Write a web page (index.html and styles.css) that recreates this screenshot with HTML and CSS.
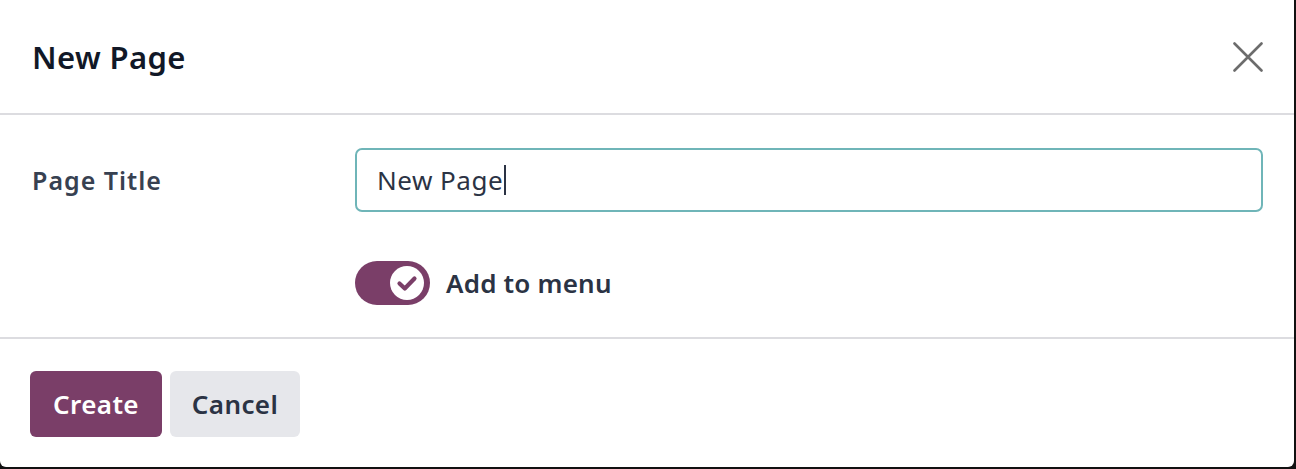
FILE: index.html
```html
<!DOCTYPE html>
<html>
<head>
<meta charset="utf-8">
<link rel="stylesheet" href="styles.css">
</head>
<body>
<div class="modal">
  <header class="modal-header">
    <h4 class="modal-title">New Page</h4>
    <button class="btn-close" aria-label="Close">
      <svg width="30" height="30" viewBox="0 0 30 30"><path d="M1.5 1.5 L28.5 28.5 M28.5 1.5 L1.5 28.5" stroke="#6c6c6c" stroke-width="2.6" stroke-linecap="round"/></svg>
    </button>
  </header>
  <main class="modal-body">
    <div class="row">
      <label class="field-label">Page Title</label>
      <div class="input"><span class="input-text">New Page</span><span class="caret"></span></div>
    </div>
    <div class="row row-toggle">
      <div class="spacer"></div>
      <div class="toggle-wrap">
        <div class="toggle">
          <svg class="knob" width="36" height="36" viewBox="0 0 36 36">
            <circle cx="18" cy="18" r="17" fill="#fff"/>
            <path d="M10.5 18.5 L15.8 23.5 L25.5 13.5" fill="none" stroke="#7a3e68" stroke-width="4.2" stroke-linecap="round" stroke-linejoin="round"/>
          </svg>
        </div>
        <span class="toggle-label">Add to menu</span>
      </div>
    </div>
  </main>
  <footer class="modal-footer">
    <button class="btn btn-primary">Create</button>
    <button class="btn btn-secondary">Cancel</button>
  </footer>
</div>
</body>
</html>
```

FILE: styles.css
```css
html, body {
  margin: 0;
  padding: 0;
  background: #111;
}
body {
  font-family: "Noto Sans", "Open Sans", sans-serif;
  color: #374151;
  width: 1296px;
  height: 469px;
  overflow: hidden;
}
.modal {
  width: 1294px;
  height: 467px;
  background: #fff;
  border-radius: 0 0 6px 6px;
  display: flex;
  flex-direction: column;
}
.modal-header {
  height: 113px;
  flex: none;
  border-bottom: 2px solid #dcdce0;
  display: flex;
  align-items: center;
  justify-content: space-between;
  padding: 0 31px 0 32px;
}
.modal-title {
  margin: 0;
  font-size: 31px;
  font-weight: 600;
  color: #111827;
  letter-spacing: 0.4px;
  padding-top: 0;
}
.btn-close {
  background: none;
  border: 0;
  padding: 0;
  width: 30px;
  height: 30px;
  display: flex;
}
.modal-body {
  height: 224px;
  flex: none;
  box-sizing: border-box;
  border-bottom: 2px solid #dcdce0;
  padding: 33px 31px 0 32px;
  display: flex;
  flex-direction: column;
}
.row {
  display: flex;
  align-items: center;
}
.field-label,
.spacer {
  width: 323px;
  flex: none;
}
.field-label {
  font-size: 25px;
  font-weight: 600;
  color: #374151;
  letter-spacing: 1px;
}
.input {
  flex: 1;
  height: 64px;
  box-sizing: border-box;
  border: 2px solid #6fb5b8;
  border-radius: 7px;
  display: flex;
  align-items: center;
  padding-left: 20px;
  font-size: 26px;
  letter-spacing: 0.5px;
  color: #2b3344;
}
.caret {
  width: 2px;
  height: 30px;
  background: #2b3344;
  margin-left: 1px;
}
.row-toggle {
  margin-top: 49px;
}
.toggle-wrap {
  display: flex;
  align-items: center;
  gap: 16px;
}
.toggle {
  width: 75px;
  height: 44px;
  border-radius: 22px;
  background: #7a3e68;
  display: flex;
  align-items: center;
  justify-content: flex-end;
  padding-right: 5px;
  box-sizing: border-box;
}
.toggle-label {
  font-size: 26px;
  font-weight: 600;
  color: #2b3344;
  letter-spacing: 0.2px;
}
.modal-footer {
  flex: 1;
  display: flex;
  align-items: flex-start;
  gap: 8px;
  padding: 32px 30px 0;
}
.btn {
  height: 66px;
  border: 0;
  border-radius: 6px;
  font-family: inherit;
  font-size: 26px;
  font-weight: 600;
  padding: 0;
  letter-spacing: 0.4px;
}
.btn-primary {
  background: #7a3e68;
  color: #fff;
  width: 132px;
}
.btn-secondary {
  background: #e6e7eb;
  color: #2b3344;
  width: 130px;
}
```
